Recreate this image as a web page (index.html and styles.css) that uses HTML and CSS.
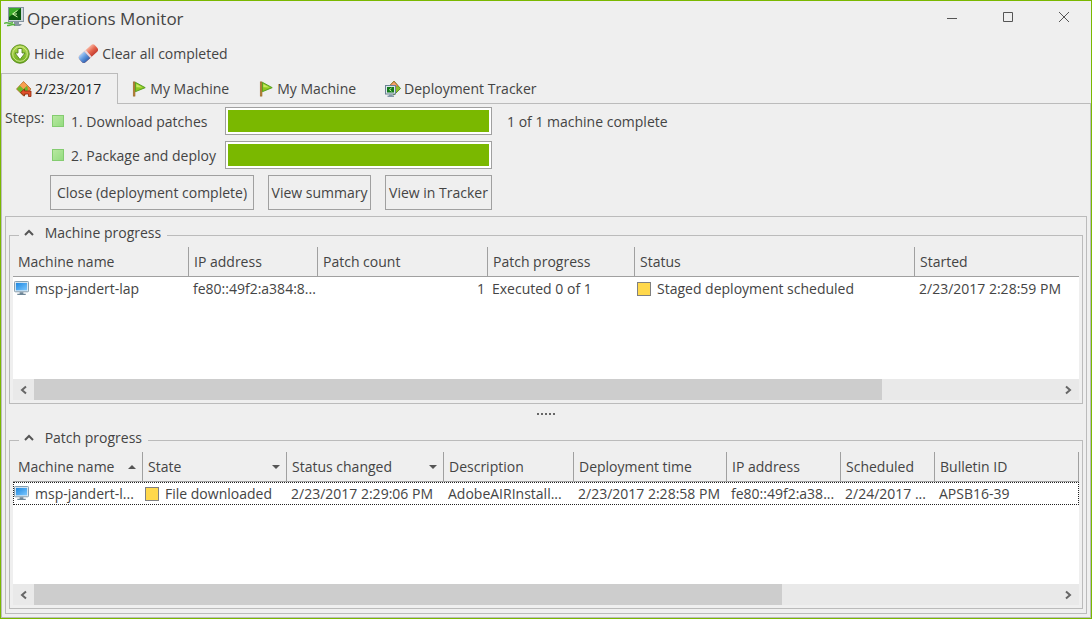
FILE: index.html
```html
<!DOCTYPE html>
<html lang="en">
  <head>
    <meta charset="UTF-8" />
    <meta name="viewport" content="width=device-width, initial-scale=1.0" />
    <title>Operations Monitor</title>
    <link rel="stylesheet" href="styles.css">
  </head>
  <body>
    <svg class="defs" aria-hidden="true">
      <defs>
        <linearGradient id="screen" x1="0" y1="0" x2="1" y2="1">
          <stop offset="0" stop-color="#1b86e0" />
          <stop offset="1" stop-color="#7cc8ff" />
        </linearGradient>
        <linearGradient id="lime" x1="0" y1="0" x2="0" y2="1">
          <stop offset="0" stop-color="#b4dc50" />
          <stop offset="1" stop-color="#6aaa1c" />
        </linearGradient>
        <linearGradient id="rubber-red" x1="0" y1="0" x2="0" y2="1">
          <stop offset="0" stop-color="#f8b09c" />
          <stop offset=".5" stop-color="#e4644c" />
          <stop offset="1" stop-color="#c43c30" />
        </linearGradient>
        <linearGradient id="rubber-blue" x1="0" y1="0" x2="0" y2="1">
          <stop offset="0" stop-color="#a8ccf4" />
          <stop offset=".5" stop-color="#5c94dc" />
          <stop offset="1" stop-color="#3464b0" />
        </linearGradient>
        <symbol id="flag" viewBox="0 0 16 18">
          <rect x="1.5" y="1" width="2" height="16" fill="#c08a3c" stroke="#8a5a1c" stroke-width=".6" />
          <path d="M4 1.5 15 7.5 4 12z" fill="#8cc820" stroke="#4d9a1a" />
          <path d="M5 3.5 12 7.3 5 7z" fill="#c8e860" />
        </symbol>
        <symbol id="pc" viewBox="0 0 16 16">
          <rect x=".5" y=".5" width="15" height="11" rx="1" fill="#e8eef2" stroke="#7c95a8" />
          <rect x="2" y="2" width="12" height="8" fill="url(#screen)" />
          <path d="M6 12h4v1.500h2.500v1.500h-9v-1.500H6z" fill="#6f8798" />
        </symbol>
      </defs>
    </svg>

    <div class="window">
      <header class="titlebar">
        <svg class="app-icon" viewBox="0 0 20 20">
          <rect x="4.500" y=".5" width="15" height="14" fill="#cfd8dc" stroke="#8695a0" />
          <rect x="5" y="1" width="12" height="12" fill="#0b5a0b" />
          <path d="M5 1h12L5 10z" fill="#3cac2a" />
          <path d="M13.500 3.500 8.500 7 13.500 10M9 7h4" fill="none" stroke="#d8ffb0" />
          <path d="M10 15h5v2h3l-2 2h-6z" fill="#8695a0" />
          <path d="M0 16.500c3-2 5 1 9-1M3 18.500c3 .5 5-2 8-.5" fill="none" stroke="#54b43c" stroke-width="1.500" />
        </svg>
        <h1>Operations Monitor</h1>
        <div class="window-buttons">
          <button aria-label="Minimize"><svg viewBox="0 0 10 10"><path d="M0 6.500h10" /></svg></button>
          <button aria-label="Maximize"><svg viewBox="0 0 10 10"><path d="M.5.5h9v9h-9z" /></svg></button>
          <button aria-label="Close"><svg viewBox="0 0 10 10"><path d="M0 0l10 10M10 0L0 10" /></svg></button>
        </div>
      </header>

      <div class="toolbar">
        <button>
          <svg class="tool-icon" viewBox="0 0 20 20">
            <circle cx="10" cy="10" r="9.200" fill="url(#lime)" stroke="#5c8f1e" />
            <circle cx="10" cy="10" r="7.300" fill="none" stroke="#cfe68c" />
            <path d="M8 4.500h4V9h3l-5 6.500L5 9h3z" fill="#fff" stroke="#4a7a18" stroke-width=".8" />
          </svg>
          Hide
        </button>
        <button>
          <svg class="tool-icon" viewBox="0 0 20 20">
            <g transform="rotate(-42 10 10)">
              <rect x="0" y="5.500" width="21" height="9" rx="3" fill="url(#rubber-red)" />
              <path d="M9 5.500v9H3Q0 14.500 0 11.500V8.500Q0 5.500 3 5.500z" fill="url(#rubber-blue)" />
              <rect x="9" y="5.500" width="2" height="9" fill="#e8d8e0" />
            </g>
          </svg>
          Clear all completed
        </button>
      </div>

      <div class="tabs" role="tablist">
        <button class="tab active" role="tab" aria-selected="true">
          <svg class="tab-icon" viewBox="0 0 16 16">
            <path d="M7.500.5 15 8 7.500 15 .5 8z" fill="#f2843c" stroke="#a8641c" stroke-width=".7" />
            <path d="M.8 8 4 4.500 7.500 8 11 4.500 12 9 7.500 14.500z" fill="#6eb82c" />
            <path d="M7.500 1 11 4.500 7.500 8 4 4.500z" fill="#f8a050" />
            <path d="M4.500 11.500 8.500 8v2H15v5.500h-2.500V13h-4v2z" fill="#e2502a" stroke="#8c2a10" stroke-width=".8" />
          </svg>
          2/23/2017
        </button>
        <button class="tab" role="tab"><svg class="tab-icon"><use href="#flag" /></svg>My Machine</button>
        <button class="tab" role="tab"><svg class="tab-icon"><use href="#flag" /></svg>My Machine</button>
        <button class="tab" role="tab">
          <svg class="tab-icon" viewBox="0 0 16 16">
            <path d="M9 0 15.500 7.500 9 14 2 7.500z" fill="#8cc028" stroke="#4c7c18" stroke-width=".8" />
            <path d="M9 .5 13 5H4.500z" fill="#f6a070" stroke="#c86a30" stroke-width=".8" />
            <rect x=".5" y="4.500" width="10" height="8.500" fill="#dce6ec" stroke="#6c8294" />
            <rect x="2" y="6" width="7" height="5.500" fill="#147a1c" />
            <path d="M6.500 7 4.500 8.700l2 1.600" fill="none" stroke="#c8f4a0" />
            <path d="M4 13.500h3.500v1H9V16H2.500v-1.500H4z" fill="#8398a8" />
          </svg>
          Deployment Tracker
        </button>
      </div>

      <main class="page">
        <section class="steps">
          <span class="steps-label">Steps:</span>
          <div class="steps-body">
            <div class="step">
              <span class="mark"></span>
              <label for="step1">1. Download patches</label>
              <progress id="step1" value="1" max="1"></progress>
              <span class="result">1 of 1 machine complete</span>
            </div>
            <div class="step">
              <span class="mark"></span>
              <label for="step2">2. Package and deploy</label>
              <progress id="step2" value="1" max="1"></progress>
            </div>
            <div class="actions">
              <button class="wide">Close (deployment complete)</button>
              <button class="summary">View summary</button>
              <button class="tracker">View in Tracker</button>
            </div>
          </div>
        </section>

        <div class="panel">
          <fieldset class="group">
            <legend>
              <button aria-label="Collapse"><svg viewBox="0 0 10 7"><path d="M1 6l4-4 4 4" /></svg></button>
              Machine progress
            </legend>
            <div class="list">
              <table>
                <colgroup>
                  <col class="w176"><col class="w129"><col class="w170"><col class="w147"><col class="w280"><col>
                </colgroup>
                <thead>
                  <tr>
                    <th>Machine name</th>
                    <th>IP address</th>
                    <th>Patch count</th>
                    <th>Patch progress</th>
                    <th>Status</th>
                    <th>Started</th>
                  </tr>
                </thead>
                <tbody>
                  <tr>
                    <td class="machine"><svg class="pc"><use href="#pc" /></svg>msp-jandert-lap</td>
                    <td>fe80::49f2:a384:8...</td>
                    <td class="num">1</td>
                    <td>Executed 0 of 1</td>
                    <td class="state"><span class="square"></span>Staged deployment scheduled</td>
                    <td>2/23/2017 2:28:59 PM</td>
                  </tr>
                </tbody>
              </table>
            </div>
            <div class="scrollbar">
              <button aria-label="Scroll left"><svg viewBox="0 0 7 10"><path d="M6 1.500L2 5l4 3.500" /></svg></button>
              <div class="track"><div class="thumb" style="width: 82.8%"></div></div>
              <button aria-label="Scroll right"><svg viewBox="0 0 7 10"><path d="M1 1.500L5 5 1 8.500" /></svg></button>
            </div>
          </fieldset>

          <div class="splitter"><i></i><i></i><i></i><i></i><i></i></div>

          <fieldset class="group">
            <legend>
              <button aria-label="Collapse"><svg viewBox="0 0 10 7"><path d="M1 6l4-4 4 4" /></svg></button>
              Patch progress
            </legend>
            <div class="list">
              <table class="patches">
                <colgroup>
                  <col class="w130"><col class="w144"><col class="w157"><col class="w130"><col class="w153"><col class="w114"><col class="w94"><col>
                </colgroup>
                <thead>
                  <tr>
                    <th class="sort up">Machine name</th>
                    <th class="sort">State</th>
                    <th class="sort">Status changed</th>
                    <th>Description</th>
                    <th>Deployment time</th>
                    <th>IP address</th>
                    <th>Scheduled</th>
                    <th>Bulletin ID</th>
                  </tr>
                </thead>
                <tbody>
                  <tr class="focused">
                    <td class="machine"><svg class="pc"><use href="#pc" /></svg>msp-jandert-l...</td>
                    <td class="state"><span class="square"></span>File downloaded</td>
                    <td>2/23/2017 2:29:06 PM</td>
                    <td>AdobeAIRInstall...</td>
                    <td>2/23/2017 2:28:58 PM</td>
                    <td>fe80::49f2:a38...</td>
                    <td>2/24/2017 ...</td>
                    <td>APSB16-39</td>
                  </tr>
                </tbody>
              </table>
            </div>
            <div class="scrollbar">
              <button aria-label="Scroll left"><svg viewBox="0 0 7 10"><path d="M6 1.500L2 5l4 3.500" /></svg></button>
              <div class="track"><div class="thumb" style="width: 73%"></div></div>
              <button aria-label="Scroll right"><svg viewBox="0 0 7 10"><path d="M1 1.500L5 5 1 8.500" /></svg></button>
            </div>
          </fieldset>
        </div>
      </main>
    </div>
  </body>
</html>
```
FILE: styles.css
```css
* {
  box-sizing: border-box;
}
body {
  margin: 0;
  background: #efefef;
  color: #444;
  font-family: "Open Sans", "Noto Sans", sans-serif;
  font-size: 14px;
  line-height: 20px;
}
button {
  font: inherit;
  color: inherit;
  background: none;
  border: 0;
  padding: 0;
  white-space: nowrap;
}
.defs {
  position: absolute;
  width: 0;
  height: 0;
}
.window {
  display: flex;
  flex-direction: column;
  min-height: 100vh;
  border: 1px solid #7ab800;
}

/* title bar and toolbar */
.titlebar {
  display: flex;
  align-items: center;
  height: 35px;
  padding-left: 3px;
}
.app-icon {
  width: 20px;
  height: 20px;
  margin: 0 3px 3px 0;
}
h1 {
  margin: 0;
  font-size: 17px;
  font-weight: 400;
}
.window-buttons {
  display: flex;
  align-self: flex-start;
  gap: 2px;
  margin-left: auto;
}
.window-buttons button {
  width: 54px;
  height: 32px;
}
.window-buttons svg {
  display: block;
  width: 10px;
  height: 10px;
  margin: auto;
  fill: none;
  stroke: #555;
}
.toolbar {
  display: flex;
  gap: 14px;
  height: 37px;
  padding: 0 0 2px 9px;
}
.toolbar button {
  display: flex;
  align-items: center;
  gap: 4px;
}
.tool-icon {
  width: 20px;
  height: 20px;
}

/* tabs */
.tabs {
  display: flex;
  height: 30px;
}
.tab {
  display: flex;
  align-items: center;
  gap: 3px;
  padding: 0 15px 0 12px;
  border: 1px solid transparent;
  border-bottom: 0;
}
.tab.active {
  position: relative;
  margin-bottom: -1px;
  padding: 0 16px 1px 14px;
  background: #efefef;
  border-color: #bbb;
  color: #222;
}
.tab-icon {
  width: 16px;
  height: 16px;
}
.page {
  display: flex;
  flex-direction: column;
  flex: 1;
  padding: 3px;
  border: 1px solid #bbb;
}

/* deployment steps */
.steps {
  display: flex;
  padding-bottom: 6px;
}
.steps-label {
  width: 45px;
  padding-top: 1px;
}
.steps-body {
  display: flex;
  flex-direction: column;
  gap: 6px;
}
.step {
  display: flex;
  align-items: center;
}
.mark {
  width: 12px;
  height: 12px;
  margin: 0 7px 0 2px;
  background: linear-gradient(135deg, #b8e8a0, #94dc80);
  border: 1px solid #84cc70;
}
.step label {
  width: 154px;
  padding-top: 2px;
}
progress {
  appearance: none;
  width: 267px;
  height: 28px;
  padding: 2px;
  background: #fff;
  border: 1px solid #a0a0a0;
}
progress::-webkit-progress-bar {
  background: #fff;
}
progress::-webkit-progress-value {
  background: #7ab800;
}
.result {
  margin-left: 15px;
  padding-top: 2px;
}
.actions {
  display: flex;
  gap: 14px;
}
.actions button {
  height: 35px;
  border: 1px solid #a0a0a0;
}
.wide {
  width: 204px;
}
.summary {
  width: 103px;
}
.tracker {
  width: 107px;
}

/* grouped lists */
.panel {
  display: flex;
  flex-direction: column;
  flex: 1;
  padding: 7px 3px 3px;
  border: 1px solid #bbb;
}
.group {
  min-width: 0;
  margin: 0;
  padding: 0 3px 3px;
  border: 1px solid #bbb;
}
legend {
  height: 23px;
  margin-left: 6px;
  padding: 0 6px 0 5px;
  line-height: 18px;
}
legend button {
  margin-right: 7px;
}
legend svg {
  width: 10px;
  height: 7px;
  vertical-align: 2px;
  fill: none;
  stroke: #555;
  stroke-width: 2;
}
.list {
  min-height: 132px;
  overflow: hidden;
  background: #fff;
}
table {
  width: 100%;
  table-layout: fixed;
  border-collapse: separate;
  border-spacing: 0;
}
th,
td {
  padding: 0 0 0 5px;
  font-weight: 400;
  text-align: left;
  white-space: nowrap;
}
th {
  height: 30px;
  background: #efefef;
  border-right: 1px solid #a0a0a0;
  border-bottom: 1px solid #a0a0a0;
}
th:last-child {
  border-right: 0;
}
.patches th:last-child {
  border-right: 1px solid #a0a0a0;
}
td {
  height: 23px;
  padding-left: 4px;
}
.sort {
  background: #efefef url("data:image/svg+xml,%3Csvg xmlns='http://www.w3.org/2000/svg' width='8' height='4'%3E%3Cpath d='M0 0h8L4 4z' fill='%23555'/%3E%3C/svg%3E") no-repeat right 6px center;
}
.sort.up {
  background-image: url("data:image/svg+xml,%3Csvg xmlns='http://www.w3.org/2000/svg' width='8' height='4'%3E%3Cpath d='M0 4h8L4 0z' fill='%23555'/%3E%3C/svg%3E");
}
.pc {
  width: 15px;
  height: 15px;
  margin-right: 6px;
  vertical-align: -2px;
}
td.machine {
  padding-left: 1px;
}
td.num {
  padding-right: 3px;
  text-align: right;
}
td.state {
  padding-left: 2px;
}
.square {
  display: inline-block;
  width: 14px;
  height: 14px;
  margin-right: 6px;
  vertical-align: -2px;
  background: #ffd84c;
  border: 1px solid #808080;
}
.focused {
  outline: 1px dotted #222;
  outline-offset: -1px;
}
.scrollbar {
  display: flex;
  height: 21px;
  background: #e9e9e9;
}
.scrollbar button {
  width: 21px;
}
.scrollbar svg {
  display: block;
  width: 7px;
  height: 10px;
  margin: auto;
  fill: none;
  stroke: #666;
  stroke-width: 2;
}
.track {
  flex: 1;
}
.thumb {
  height: 100%;
  background: #cdcdcd;
}
.splitter {
  display: flex;
  align-items: center;
  justify-content: center;
  gap: 2px;
  height: 25px;
  padding-bottom: 5px;
}
.splitter i {
  width: 2px;
  height: 2px;
  background: #666;
}

/* list column widths */
.w94 {
  width: 94px;
}
.w114 {
  width: 114px;
}
.w129 {
  width: 129px;
}
.w130 {
  width: 130px;
}
.w144 {
  width: 144px;
}
.w147 {
  width: 147px;
}
.w153 {
  width: 153px;
}
.w157 {
  width: 157px;
}
.w170 {
  width: 170px;
}
.w176 {
  width: 176px;
}
.w280 {
  width: 280px;
}
```
